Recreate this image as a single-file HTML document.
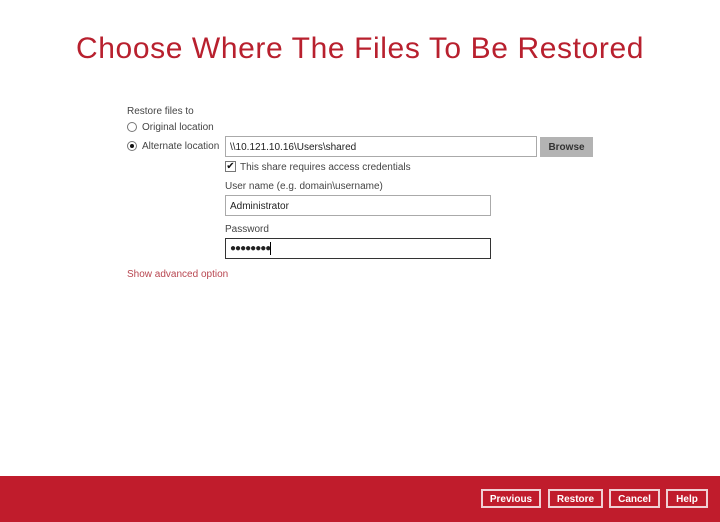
<!DOCTYPE html>
<html><head><style>
body{margin:0;width:720px;height:522px;background:#fff;font-family:"Liberation Sans","DejaVu Sans",sans-serif;position:relative;overflow:hidden;color:#444}
.a{position:absolute;white-space:nowrap}
h1{position:absolute;left:0;width:720px;top:32px;margin:0;text-align:center;font-weight:normal;font-size:30px;color:#b8202e;letter-spacing:0.6px}
.t{font-size:10px;color:#444}
.inp{position:absolute;border:1px solid #aaa;background:#fff;font-size:10px;color:#222;box-sizing:border-box;padding-left:4px;line-height:18px}
.radio{position:absolute;width:10px;height:10px;border:1px solid #777;border-radius:50%;box-sizing:border-box;background:#fff}
.foot{position:absolute;left:0;top:476px;width:720px;height:46px;background:#c01c2c}
.btn{position:absolute;top:489px;height:19px;border:2px solid #f0d0d4;box-sizing:border-box;color:#fff;font-size:10px;font-weight:bold;text-align:center;line-height:17px}
</style></head><body>
<h1>Choose Where The Files To Be Restored</h1>
<div class="a t" style="left:127px;top:106px">Restore files to</div>
<div class="radio" style="left:127px;top:122px"></div>
<div class="a t" style="left:142px;top:122px">Original location</div>
<div class="radio" style="left:127px;top:141px"><div style="position:absolute;left:2px;top:2px;width:4px;height:4px;border-radius:50%;background:#111"></div></div>
<div class="a t" style="left:142px;top:141px">Alternate location</div>
<div class="inp" style="left:225px;top:136px;width:312px;height:21px;line-height:21px">\\10.121.10.16\Users\shared</div>
<div class="a" style="left:540px;top:137px;width:53px;height:20px;background:#b3b3b3;font-size:10px;font-weight:bold;color:#333;text-align:center;line-height:21px">Browse</div>
<div class="a" style="left:225px;top:161px;width:11px;height:11px;border:1px solid #777;box-sizing:border-box;font-size:10px;line-height:9px;text-align:center;color:#111">✔</div>
<div class="a t" style="left:240px;top:162px">This share requires access credentials</div>
<div class="a t" style="left:225px;top:181px">User name (e.g. domain\username)</div>
<div class="inp" style="left:225px;top:195px;width:266px;height:21px;line-height:21px">Administrator</div>
<div class="a t" style="left:225px;top:224px">Password</div>
<div class="inp" style="left:225px;top:238px;width:266px;height:21px;line-height:19px;border-color:#333;font-weight:bold;letter-spacing:-1px">●●●●●●●●<span style="display:inline-block;width:1px;height:13px;background:#000;vertical-align:middle"></span></div>
<div class="a" style="left:127px;top:269px;font-size:10px;color:#b84650">Show advanced option</div>
<div class="foot"></div>
<div class="btn" style="left:481px;width:60px">Previous</div>
<div class="btn" style="left:548px;width:55px">Restore</div>
<div class="btn" style="left:609px;width:51px">Cancel</div>
<div class="btn" style="left:666px;width:42px">Help</div>
</body></html>
